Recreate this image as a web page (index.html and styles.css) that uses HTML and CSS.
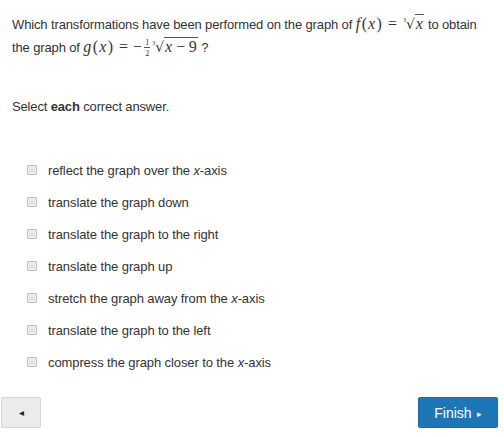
FILE: index.html
```html
<!DOCTYPE html>
<html>
<head>
<meta charset="utf-8">
<link rel="stylesheet" href="styles.css">
</head>
<body>
<div class="page">
  <div class="question">
    <p class="prompt"><span class="ln">Which transformations have been performed on the graph of</span> <span class="math"><i>f</i><span class="p">(</span><i>x</i><span class="p">)</span><span class="rel">=</span><span class="root"><span class="idx">3</span><span class="rad">√</span><span class="under"><i>x</i></span></span></span> <span class="ln">to obtain</span> <span class="ln">the graph of</span> <span class="math"><i>g</i><span class="p">(</span><i>x</i><span class="p">)</span><span class="rel">=</span><span class="neg">−</span><span class="frac"><span class="num">1</span><span class="den">2</span></span><span class="root"><span class="idx">3</span><span class="rad">√</span><span class="under"><i>x</i><span class="bin">−</span>9</span></span></span> <span class="ln">?</span></p>
    <p class="instr">Select <b>each</b> correct answer.</p>
  </div>
  <ul class="answers">
    <li class="answer"><span class="box"></span><span>reflect the graph over the <i>x</i>-axis</span></li>
    <li class="answer"><span class="box"></span><span>translate the graph down</span></li>
    <li class="answer"><span class="box"></span><span>translate the graph to the right</span></li>
    <li class="answer"><span class="box"></span><span>translate the graph up</span></li>
    <li class="answer"><span class="box"></span><span>stretch the graph away from the <i>x</i>-axis</span></li>
    <li class="answer"><span class="box"></span><span>translate the graph to the left</span></li>
    <li class="answer"><span class="box"></span><span>compress the graph closer to the <i>x</i>-axis</span></li>
  </ul>
  <div class="nav">
    <button class="btn back">◂</button>
    <button class="btn finish">Finish<span class="tri">▸</span></button>
  </div>
</div>
</body>
</html>
```
FILE: styles.css
```css
html, body {
  margin: 0;
  padding: 0;
  background: #fff;
}
body {
  font-family: "Liberation Sans", Arial, sans-serif;
  font-size: 13px;
  color: #333;
  width: 504px;
  height: 437px;
  overflow: hidden;
}
.page {
  padding: 0 12px;
  position: relative;
  height: 437px;
}
.prompt {
  margin: 0;
  padding-top: 13px;
  line-height: 22px;
  width: 484px;
  letter-spacing: -0.13px;
}
.ln {
  white-space: nowrap;
}
.math {
  font-family: "Liberation Serif", "Times New Roman", serif;
  font-size: 16px;
  color: #333;
  white-space: nowrap;
  letter-spacing: 0;
}
.math i {
  font-style: italic;
  padding-right: 0.5px;
}
.p {
  padding: 0 1px;
}
.rel {
  margin: 0 5px;
}
.neg {
  margin-right: 1px;
}
.bin {
  margin: 0 3.5px;
}
.root {
  display: inline-block;
  padding-left: 1px;
}
.idx {
  font-size: 6px;
  vertical-align: 7px;
  line-height: 1;
}
.rad {
  font-family: "DejaVu Sans", sans-serif;
  font-size: 14px;
}
.under {
  border-top: 1px solid #555;
  padding: 0 1px;
}
.frac {
  display: inline-flex;
  flex-direction: column;
  vertical-align: middle;
  font-size: 8px;
  line-height: 9px;
  text-align: center;
  margin: 0 1px;
}
.num {
  border-bottom: 1px solid #555;
  padding: 0 1px;
}
.den {
  padding-top: 1px;
}
.instr {
  margin: 0;
  padding-top: 39px;
  line-height: 18px;
  letter-spacing: -0.15px;
}
.instr b {
  font-weight: bold;
  color: #333;
}
.answers {
  list-style: none;
  margin: 0;
  padding: 0;
  padding-top: 45px;
  display: flex;
  flex-direction: column;
  gap: 14px;
}
.answer {
  display: flex;
  align-items: center;
  height: 18px;
  padding-left: 15px;
  letter-spacing: -0.1px;
}
.box {
  width: 8px;
  height: 8px;
  border: 1px solid #bbb;
  background: #e3e3e3;
  border-radius: 1px;
  margin-right: 11px;
  box-shadow: inset 0 0 0 1px #f4f4f4;
}
.nav {
  position: absolute;
  left: 1px;
  right: 6px;
  top: 397px;
  display: flex;
  justify-content: space-between;
}
.btn {
  font-family: "Liberation Sans", Arial, sans-serif;
  height: 31px;
  border-radius: 2px;
  cursor: pointer;
}
.back {
  width: 40px;
  background: #ebebeb;
  border: 1px solid #d6d6d6;
  color: #222;
  font-size: 10px;
  padding: 0;
}
.finish {
  width: 80px;
  background: #1d76b6;
  border: 1px solid #1a6da9;
  color: #fff;
  font-size: 14px;
  padding: 0;
}
.tri {
  font-size: 9px;
  vertical-align: 1px;
  margin-left: 5px;
}
```
